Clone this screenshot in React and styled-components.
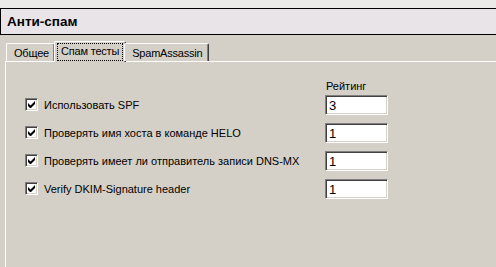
import styled, { createGlobalStyle } from "styled-components";

const GlobalStyle = createGlobalStyle`
  html, body {
    margin: 0;
    padding: 0;
    background: #d4d0c8;
  }
  body {
    font-family: "Liberation Sans", Arial, sans-serif;
    font-size: 11px;
    color: #000;
  }
`;

const Window = styled.div`
  width: 496px;
  height: 267px;
  overflow: hidden;
  background: #d4d0c8;
  display: flex;
  flex-direction: column;
`;

const TopStrip = styled.div`
  height: 8px;
  background: #eceae9;
  border-bottom: 1px solid #000;
`;

const TitleBar = styled.div`
  height: 25px;
  background: #e8e4e8;
  border-left: 1px solid #000;
  border-bottom: 1px solid #000;
  display: flex;
  align-items: center;
  padding-left: 6px;
  font-size: 13.5px;
  font-weight: bold;
`;

const Body = styled.div`
  flex: 1;
  padding: 6px 0 0 5px;
  display: flex;
  flex-direction: column;
`;

const TabRow = styled.div`
  display: flex;
  align-items: flex-end;
  height: 20px;
  padding-left: 1px;
  position: relative;
  z-index: 1;
`;

const Tab = styled.div`
  height: ${(p) => (p.$active ? "21px" : "18px")};
  margin: ${(p) => (p.$active ? "0 -2px -1px -1px" : "0")};
  padding: ${(p) => (p.$active ? "2px 3px 0" : "2px 5px 0 7px")};
  box-sizing: border-box;
  background: #d4d0c8;
  border-top: 1px solid #fff;
  border-left: 1px solid #fff;
  border-right: 1px solid #404040;
  box-shadow: inset -1px 0 0 #808080;
  border-radius: 2px 2px 0 0;
  font-size: 11px;
  letter-spacing: -0.2px;
  line-height: 14px;
  display: flex;
  align-items: flex-start;
  white-space: nowrap;
`;

const FocusText = styled.span`
  outline: 1px dotted #000;
  outline-offset: 0;
  padding: 0 3px 1px 3px;
  line-height: 15px;
`;

const Panel = styled.div`
  flex: 1;
  border-top: 1px solid #fff;
  border-left: 1px solid #fff;
  padding: 18px 0 0 19px;
  display: flex;
  flex-direction: column;
`;

const HeaderRow = styled.div`
  display: flex;
  height: 15px;
  padding-left: 301px;
  font-size: 11px;
  line-height: 13px;
`;

const Rows = styled.div`
  display: flex;
  flex-direction: column;
  gap: 8px;
`;

const Row = styled.div`
  display: flex;
  align-items: center;
  height: 20px;
`;

const CheckLabel = styled.label`
  width: 300px;
  display: flex;
  align-items: center;
  gap: 6px;
  font-size: 11px;
  margin-top: -1px;
`;

const Box = styled.span`
  width: 13px;
  height: 13px;
  flex: none;
  box-sizing: border-box;
  background: #fff;
  border-top: 1px solid #808080;
  border-left: 1px solid #808080;
  border-right: 1px solid #fff;
  border-bottom: 1px solid #fff;
  box-shadow: inset 1px 1px 0 #404040, inset -1px -1px 0 #d4d0c8;
  display: flex;
  align-items: center;
  justify-content: center;
`;

const Field = styled.div`
  width: 63px;
  height: 20px;
  box-sizing: border-box;
  background: #fff;
  border-top: 1px solid #808080;
  border-left: 1px solid #808080;
  border-right: 1px solid #fff;
  border-bottom: 1px solid #fff;
  box-shadow: inset 1px 1px 0 #404040, inset -1px -1px 0 #d4d0c8;
  padding: 2px 0 0 3px;
  font-size: 13px;
  line-height: 15px;
`;

const Check = () => (
  <Box>
    <svg width="7" height="7" viewBox="0 0 7 7">
      <path d="M0 2v3l2 2h1l4-4V0L2.5 4.5z" fill="#000" />
    </svg>
  </Box>
);

const rows = [
  { label: "Использовать SPF", value: "3" },
  { label: "Проверять имя хоста в команде HELO", value: "1" },
  { label: "Проверять имеет ли отправитель записи DNS-MX", value: "1" },
  { label: "Verify DKIM-Signature header", value: "1" },
];

export default function App() {
  return (
    <>
      <GlobalStyle />
      <Window>
        <TopStrip />
        <TitleBar>Анти-спам</TitleBar>
        <Body>
          <TabRow>
            <Tab>Общее</Tab>
            <Tab $active>
              <FocusText>Спам тесты</FocusText>
            </Tab>
            <Tab>SpamAssassin</Tab>
          </TabRow>
          <Panel>
            <HeaderRow>Рейтинг</HeaderRow>
            <Rows>
              {rows.map((r) => (
                <Row key={r.label}>
                  <CheckLabel>
                    <Check />
                    {r.label}
                  </CheckLabel>
                  <Field>{r.value}</Field>
                </Row>
              ))}
            </Rows>
          </Panel>
        </Body>
      </Window>
    </>
  );
}
